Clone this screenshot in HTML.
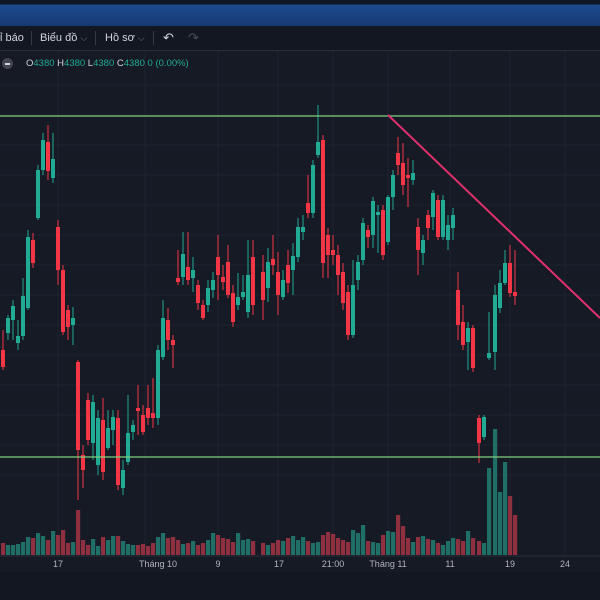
<!DOCTYPE html>
<html><head><meta charset="utf-8"><style>
html,body{margin:0;padding:0;width:600px;height:600px;overflow:hidden;background:#161a25;font-family:"Liberation Sans","Noto Sans CJK SC",sans-serif}
#top{position:absolute;left:0;top:0;width:600px;height:26px;background:linear-gradient(#0e1524 0,#0e1524 4px,#1d4a8e 5px,#163a74 26px)}
#tb{position:absolute;left:0;top:26px;width:600px;height:24px;background:#131722;border-bottom:1px solid #2a2e39;color:#d1d4dc;font-size:11px}
#tb span{position:absolute;top:6px}
.sep{position:absolute;top:5px;width:1px;height:14px;background:#363a45}
#ohlc{position:absolute;top:58px;left:26px;font-size:9.5px;color:#d1d4dc}
#ohlc b{font-weight:normal;color:#22ab94}
svg{position:absolute;left:0;top:0}
</style></head><body>
<svg id="s" width="600" height="600"></svg>
<div id="top"></div>
<div id="tb">
<span style="left:0">ỉ báo</span><div class="sep" style="left:31px"></div>
<span style="left:40px">Biểu đồ <span style="position:static;color:#787b86;font-size:9px">⌵</span></span><div class="sep" style="left:95px"></div>
<span style="left:105px">Hồ sơ <span style="position:static;color:#787b86;font-size:9px">⌵</span></span><div class="sep" style="left:153px"></div>
<span style="left:163px;top:4px;font-size:13px">↶</span><span style="left:188px;top:4px;font-size:13px;color:#4a4e59">↷</span>
</div>
<div style="position:absolute;left:2px;top:58px;width:11px;height:11px;border-radius:50%;background:#434651"><div style="position:absolute;left:3px;top:5px;width:5px;height:1.5px;background:#d1d4dc"></div></div>
<div id="ohlc">O<b>4380</b> H<b>4380</b> L<b>4380</b> C<b>4380</b> <b>0 (0.00%)</b></div>
<script>
var d=[[3,'r',350,367,330,370],[8,'g',318,333,315,340],[13,'g',306,320,300,340],[18,'g',336,343,320,350],[23,'g',296,336,278,340],[28,'g',237,308,230,310],[33,'r',240,263,233,268],[38,'g',170,218,165,220],[43,'g',140,170,133,175],[48,'r',142,171,125,180],[53,'g',159,178,133,183],[58,'r',227,270,220,285],[63,'r',270,332,265,335],[68,'r',310,327,305,340],[73,'g',318,325,307,345],[78,'r',362,450,360,500],[83,'r',455,470,445,488],[88,'r',400,440,393,445],[93,'g',402,443,395,460],[98,'g',418,465,410,475],[103,'r',420,472,398,480],[108,'g',428,448,410,450],[113,'g',417,430,410,445],[118,'r',418,485,410,490],[123,'g',470,488,460,495],[128,'g',433,462,395,465],[133,'g',425,432,420,440],[138,'r',408,411,385,435],[143,'r',415,432,405,435],[148,'r',408,418,385,425],[153,'r',413,418,378,428],[158,'g',350,418,345,425],[163,'g',318,357,300,360],[168,'r',320,340,308,350],[173,'r',340,345,335,368],[178,'r',278,282,250,285],[183,'g',254,277,232,285],[188,'r',267,280,232,285],[193,'g',270,278,257,292],[198,'r',285,303,280,310],[203,'r',305,318,300,320],[208,'g',288,305,280,312],[213,'g',280,290,272,298],[218,'r',257,275,235,300],[223,'r',277,282,265,290],[228,'r',262,295,245,298],[233,'r',293,322,285,327],[238,'g',297,305,273,310],[243,'g',292,297,275,300],[248,'g',275,312,240,318],[253,'r',257,305,240,315],[263,'r',272,300,255,320],[268,'g',262,288,248,302],[273,'r',259,265,235,275],[278,'r',272,295,252,315],[283,'g',280,297,270,300],[288,'r',265,283,250,293],[293,'g',256,270,243,295],[298,'g',227,257,218,262],[303,'g',227,232,215,240],[308,'r',203,213,175,218],[313,'g',165,213,160,218],[318,'g',142,155,105,158],[323,'r',140,263,135,278],[328,'r',235,255,228,278],[333,'r',250,255,235,265],[338,'r',255,275,245,295],[343,'r',272,303,263,310],[348,'r',292,335,285,340],[353,'g',285,335,260,338],[358,'g',262,280,255,290],[363,'g',223,260,218,265],[368,'r',230,237,225,248],[373,'g',201,235,197,248],[378,'g',212,215,205,253],[383,'r',210,255,205,260],[388,'g',197,242,195,245],[393,'g',175,197,170,210],[398,'r',153,165,137,175],[403,'r',163,185,143,195],[408,'r',175,178,158,207],[413,'g',173,180,160,185],[418,'r',227,250,218,275],[423,'g',240,253,235,265],[428,'r',215,228,210,240],[433,'g',193,217,190,230],[438,'r',200,237,195,240],[443,'g',200,237,195,240],[448,'g',225,240,215,250],[453,'g',215,228,208,240],[458,'r',290,325,272,340],[463,'r',322,345,305,350],[468,'g',328,342,322,370],[473,'r',328,368,325,372],[479,'r',418,443,415,463],[484,'g',417,437,415,440],[489,'g',353,358,312,360],[495,'g',295,352,285,370],[500,'g',283,308,270,313],[505,'g',263,283,250,285],[510,'r',263,293,245,297],[515,'r',292,296,250,305]];
var vh=[12,10,10,11,13,18,17,22,19,15,24,20,25,12,13,45,15,10,16,9,18,15,19,19,14,11,10,10,11,9,12,18,22,17,18,15,11,12,14,10,12,15,22,20,17,16,13,22,15,16,14,12,10,12,15,14,17,19,15,18,14,12,13,20,23,21,17,15,13,25,22,30,14,13,12,20,24,23,40,29,17,13,18,19,16,15,12,10,14,17,16,14,24,17,14,12,19,28,33,27,21,15,32,20,14,21,11,19,18,20,16,20,28,33,25,25,55,60,50,40,33];
var s='';
for(var i=0;i<14;i++){var y=85+i*30;s+='<line x1="0" y1="'+y+'" x2="600" y2="'+y+'" stroke="#1f2330" stroke-width="1"/>';}
[58,145,218,278,333,388,450,510,565].forEach(function(x){s+='<line x1="'+x+'" y1="50" x2="'+x+'" y2="556" stroke="#1f2330"/>';});
var G='#22ab94',R='#f23645';
var vol='';
d.forEach(function(c,i){var col=c[1]=='g'?G:R;var x=c[0];
var h=vh[i]||15; if(x>=489){h={489:87,495:126,500:63,505:93,510:59,515:40}[x];}
vol+='<rect x="'+(x-2)+'" y="'+(555-h)+'" width="4.2" height="'+h+'" fill="'+(c[1]=='g'?'#1f6f66':'#8f3040')+'"/>';
s+='';});
s+=vol;
d.forEach(function(c){var col=c[1]=='g'?G:R;var x=c[0];
s+='<line x1="'+x+'" y1="'+c[4]+'" x2="'+x+'" y2="'+c[5]+'" stroke="'+col+'" stroke-width="1"/>';
s+='<rect x="'+(x-2)+'" y="'+c[2]+'" width="4" height="'+Math.max(2,c[3]-c[2])+'" fill="'+col+'"/>';});
s+='<line x1="0" y1="116" x2="600" y2="116" stroke="#7ed07e" stroke-width="1.3"/>';
s+='<line x1="0" y1="457" x2="600" y2="457" stroke="#7ed07e" stroke-width="1.3"/>';
s+='<line x1="388" y1="115" x2="600" y2="318" stroke="#e0306e" stroke-width="2"/>';
s+='<line x1="0" y1="556" x2="600" y2="556" stroke="#2a2e39"/>';
s+='<rect x="0" y="572" width="600" height="28" fill="#131722"/>';
[[58,'17'],[158,'Tháng 10'],[218,'9'],[279,'17'],[333,'21:00'],[388,'Tháng 11'],[450,'11'],[510,'19'],[565,'24']].forEach(function(t){s+='<text x="'+t[0]+'" y="567" fill="#b2b5be" font-size="9" text-anchor="middle" font-family="Liberation Sans">'+t[1]+'</text>';});
document.getElementById('s').innerHTML=s;
</script>
</body></html>
